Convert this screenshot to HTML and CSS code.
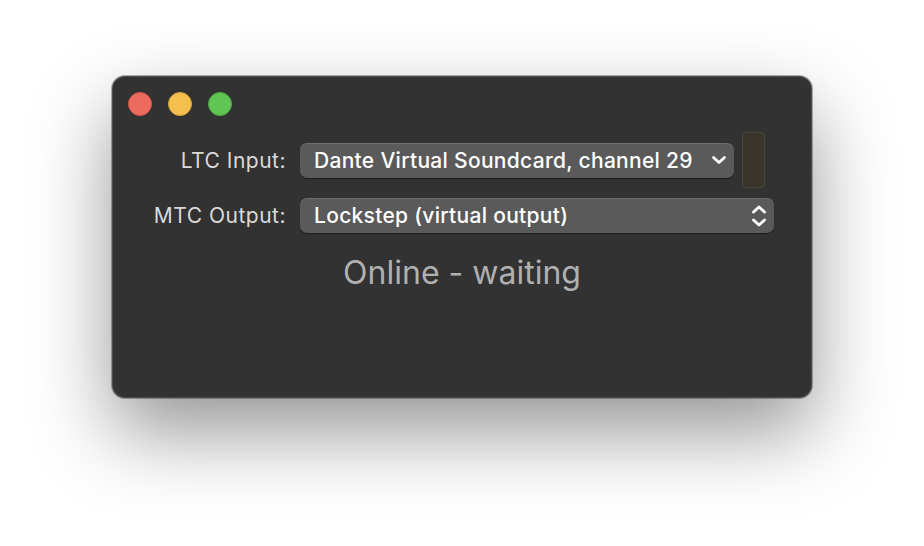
FILE: index.html
```html
<!DOCTYPE html>
<html lang="en">
<head>
    <meta charset="UTF-8">
    <meta name="viewport" content="width=device-width, initial-scale=1.0">
    <title>LTC to MTC</title>
    <link rel="stylesheet" href="styles.css">
</head>
<body>
    <div class="window">
        <div class="titlebar">
            <span class="light close"></span>
            <span class="light minimize"></span>
            <span class="light zoom"></span>
        </div>
        <div class="form">
            <label class="label">LTC Input:</label>
            <div class="field with-meter">
                <div class="popup">
                    <span class="popup-text">Dante Virtual Soundcard, channel 29</span>
                    <svg class="chevron" width="16" height="10" viewBox="0 0 16 10">
                        <path d="M2.5 2.5 L8 7.5 L13.5 2.5" fill="none" stroke="#fff" stroke-width="2.8" stroke-linecap="round" stroke-linejoin="round"/>
                    </svg>
                </div>
                <div class="meter"></div>
            </div>
            <label class="label">MTC Output:</label>
            <div class="field">
                <div class="popup">
                    <span class="popup-text">Lockstep (virtual output)</span>
                    <svg class="chevron" width="16" height="28" viewBox="0 0 16 28">
                        <path d="M2.5 10 L8 5 L13.5 10" fill="none" stroke="#fff" stroke-width="2.8" stroke-linecap="round" stroke-linejoin="round"/>
                        <path d="M2.5 18 L8 23 L13.5 18" fill="none" stroke="#fff" stroke-width="2.8" stroke-linecap="round" stroke-linejoin="round"/>
                    </svg>
                </div>
            </div>
        </div>
        <div class="status">Online - waiting</div>
    </div>
</body>
</html>
```

FILE: styles.css
```css
html, body {
    height: 100%;
}
body {
    margin: 0;
    padding-top: 76px;
    box-sizing: border-box;
    background-color: #ffffff;
    font-family: Inter, "Noto Sans", sans-serif;
}
.window {
    width: 700px;
    height: 322px;
    margin: 0 auto;
    box-sizing: border-box;
    background-color: #323232;
    border-radius: 13px;
    box-shadow: 0 0 0 1px rgba(0, 0, 0, 0.3),
                inset 0 0 0 1px rgba(255, 255, 255, 0.14),
                0 34px 80px rgba(0, 0, 0, 0.42);
}
.titlebar {
    height: 56px;
    box-sizing: border-box;
    padding: 16px 0 0 16px;
    display: flex;
    gap: 16px;
}
.light {
    width: 24px;
    height: 24px;
    border-radius: 50%;
    box-sizing: border-box;
}
.close {
    background-color: #ec6a5e;
    border: 1px solid #d3564b;
}
.minimize {
    background-color: #f4bf4f;
    border: 1px solid #d8a33c;
}
.zoom {
    background-color: #61c554;
    border: 1px solid #4eaa41;
}
.form {
    display: grid;
    grid-template-columns: 174px 474px;
    column-gap: 14px;
    row-gap: 10px;
    align-items: center;
}
.label {
    text-align: right;
    color: #dadada;
    font-size: 21px;
    letter-spacing: 0.5px;
}
.field {
    display: flex;
    align-items: center;
    gap: 8px;
}
.with-meter {
    padding-right: 9px;
}
.popup {
    flex: 1;
    height: 35px;
    box-sizing: border-box;
    padding: 0 7px 0 14px;
    display: flex;
    align-items: center;
    justify-content: space-between;
    background-color: #5a5a5a;
    border-radius: 7px;
    box-shadow: inset 0 1px 0 rgba(255, 255, 255, 0.12),
                0 1px 1px rgba(0, 0, 0, 0.45);
}
.popup-text {
    color: #ffffff;
    font-size: 21px;
    font-weight: 500;
    letter-spacing: 0.3px;
    white-space: nowrap;
}
.meter {
    width: 23px;
    height: 56px;
    box-sizing: border-box;
    background-color: #3a352a;
    border: 1px solid #4a463c;
    border-radius: 4px;
}
.status {
    margin-top: 20px;
    text-align: center;
    color: #b0b0b0;
    font-size: 32px;
}
```
